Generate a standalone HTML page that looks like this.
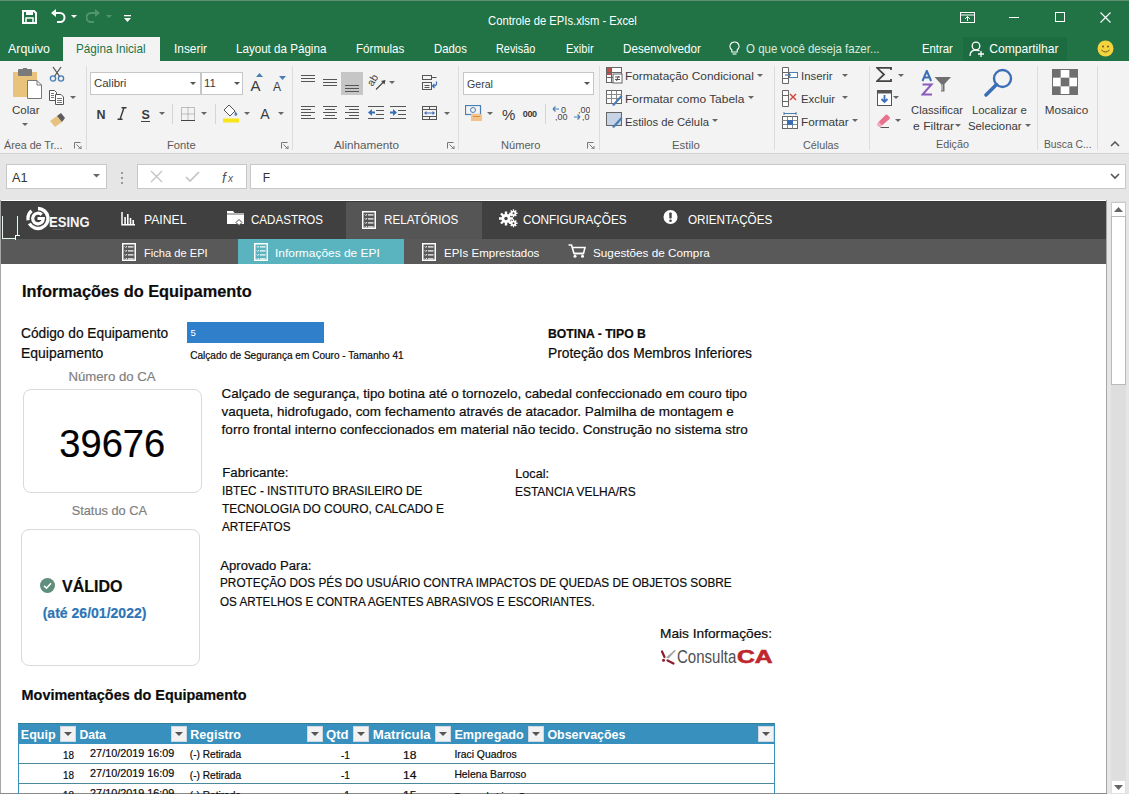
<!DOCTYPE html>
<html><head><meta charset="utf-8">
<style>
*{margin:0;padding:0;box-sizing:border-box}
html,body{width:1129px;height:794px;overflow:hidden;background:#fff}
body{position:relative;font-family:"Liberation Sans",sans-serif}
.t{position:absolute;white-space:nowrap}
.k{-webkit-text-stroke:0.2px currentColor}
.r{position:absolute;display:block}
</style></head><body>

<div class="r" style="left:0px;top:0px;width:1129px;height:61px;background:#217346"></div>
<div class="r" style="left:0px;top:0px;width:1129px;height:1px;background:#5e8e72"></div>
<svg class="r" style="left:22px;top:10px;" width="15" height="14" viewBox="0 0 15 14"><path d="M1 1 H12 L14 3 V13 H1 Z" fill="none" stroke="#fff" stroke-width="2"/><rect x="4" y="1" width="7" height="4" fill="#fff"/><rect x="4" y="8" width="7" height="5" fill="none" stroke="#fff" stroke-width="1.5"/></svg>
<svg class="r" style="left:50px;top:9px;" width="16" height="15" viewBox="0 0 16 15"><path d="M4 4 H10 A4.5 4.5 0 0 1 10 13 H7" fill="none" stroke="#fff" stroke-width="2"/><path d="M1 4 L6 0 V8 Z" fill="#fff"/></svg>
<svg class="r" style="left:70.5px;top:15px;" width="6" height="4" viewBox="0 0 6 4"><path d="M0 0 L6 0 L3 3 Z" fill="#fff"/></svg>
<svg class="r" style="left:86px;top:9px;" width="15" height="15" viewBox="0 0 15 15"><path d="M11 4 H5 A4.5 4.5 0 0 0 5 13 H8" fill="none" stroke="#4f9670" stroke-width="2"/><path d="M14 4 L9 0 V8 Z" fill="#4f9670"/></svg>
<svg class="r" style="left:105.5px;top:15px;" width="6" height="4" viewBox="0 0 6 4"><path d="M0 0 L6 0 L3 3 Z" fill="#4f9670"/></svg>
<svg class="r" style="left:124px;top:15px;" width="8" height="8" viewBox="0 0 8 8"><rect x="0" y="0" width="7" height="1.3" fill="#fff"/><path d="M0 3 H7 L3.5 7 Z" fill="#fff"/></svg>
<div class="t" style="left:488.00px;top:15.30px;font-size:12.20px;line-height:12.20px;color:#ffffff;transform:scaleX(0.9233);transform-origin:0 0;">Controle de EPIs.xlsm - Excel</div>
<svg class="r" style="left:960px;top:12px;" width="15" height="11" viewBox="0 0 15 11"><rect x="0.5" y="0.5" width="14" height="10" fill="none" stroke="#fff"/><path d="M0.5 3 H14.5" stroke="#fff"/><path d="M7.5 9 V4.5 M5 7 L7.5 4.5 L10 7" fill="none" stroke="#fff"/></svg>
<div class="r" style="left:1009px;top:17px;width:10px;height:1px;background:#fff"></div>
<div class="r" style="left:1055px;top:12px;width:10px;height:10px;border:1px solid #fff"></div>
<svg class="r" style="left:1100px;top:12px;" width="11" height="11" viewBox="0 0 11 11"><path d="M0.5 0.5 L10.5 10.5 M10.5 0.5 L0.5 10.5" stroke="#fff" stroke-width="1.1"/></svg>
<div class="r" style="left:63px;top:37px;width:97px;height:24px;background:#f3f3f3"></div>
<div class="t" style="left:8.00px;top:43.25px;font-size:12.10px;line-height:12.10px;color:#ffffff;transform:scaleX(1.0236);transform-origin:0 0;">Arquivo</div>
<div class="t" style="left:76.00px;top:43.25px;font-size:12.10px;line-height:12.10px;color:#217346;transform:scaleX(0.9671);transform-origin:0 0;">Página Inicial</div>
<div class="t" style="left:174.30px;top:43.25px;font-size:12.10px;line-height:12.10px;color:#ffffff;transform:scaleX(0.9817);transform-origin:0 0;">Inserir</div>
<div class="t" style="left:236.30px;top:43.25px;font-size:12.10px;line-height:12.10px;color:#ffffff;transform:scaleX(0.9597);transform-origin:0 0;">Layout da Página</div>
<div class="t" style="left:356.20px;top:43.25px;font-size:12.10px;line-height:12.10px;color:#ffffff;transform:scaleX(0.9597);transform-origin:0 0;">Fórmulas</div>
<div class="t" style="left:434.40px;top:43.25px;font-size:12.10px;line-height:12.10px;color:#ffffff;transform:scaleX(0.9405);transform-origin:0 0;">Dados</div>
<div class="t" style="left:496.40px;top:43.25px;font-size:12.10px;line-height:12.10px;color:#ffffff;transform:scaleX(0.8990);transform-origin:0 0;">Revisão</div>
<div class="t" style="left:565.50px;top:43.25px;font-size:12.10px;line-height:12.10px;color:#ffffff;transform:scaleX(0.9120);transform-origin:0 0;">Exibir</div>
<div class="t" style="left:622.50px;top:43.25px;font-size:12.10px;line-height:12.10px;color:#ffffff;transform:scaleX(0.9652);transform-origin:0 0;">Desenvolvedor</div>
<svg class="r" style="left:729px;top:41px;" width="11" height="15" viewBox="0 0 11 15"><path d="M5.5 1 A4.3 4.3 0 0 1 8.2 8.8 V11 H2.8 V8.8 A4.3 4.3 0 0 1 5.5 1 Z" fill="none" stroke="#fff" stroke-width="1.1"/><path d="M3.5 13 H7.5" stroke="#fff" stroke-width="1.1"/></svg>
<div class="t" style="left:746.00px;top:43.25px;font-size:12.10px;line-height:12.10px;color:#d9e9df;transform:scaleX(0.9504);transform-origin:0 0;">O que você deseja fazer...</div>
<div class="t" style="left:921.90px;top:43.25px;font-size:12.10px;line-height:12.10px;color:#ffffff;transform:scaleX(0.9378);transform-origin:0 0;">Entrar</div>
<div class="r" style="left:963px;top:37px;width:104px;height:24px;background:#1d6b40"></div>
<svg class="r" style="left:969px;top:41px;" width="16" height="16" viewBox="0 0 16 16"><circle cx="7" cy="5" r="3.8" fill="none" stroke="#fff" stroke-width="1.3"/><path d="M1 15 C1 10.5 4 9 7 9 C8.5 9 9.5 9.4 10.5 10" fill="none" stroke="#fff" stroke-width="1.3"/><path d="M12 10 V16 M9 13 H15" stroke="#fff" stroke-width="1.3"/></svg>
<div class="t" style="left:989.20px;top:43.25px;font-size:12.10px;line-height:12.10px;color:#ffffff;">Compartilhar</div>
<svg class="r" style="left:1097px;top:40px;" width="18" height="17" viewBox="0 0 18 17"><circle cx="8.5" cy="8.5" r="8" fill="#f5d33e"/><circle cx="6" cy="6.5" r="1" fill="#6b5a1a"/><circle cx="11" cy="6.5" r="1" fill="#6b5a1a"/><path d="M4.5 10 Q8.5 14 12.5 10" fill="none" stroke="#6b5a1a" stroke-width="1"/></svg>
<div class="r" style="left:0px;top:61px;width:1129px;height:92px;background:#f3f3f3"></div>
<div class="r" style="left:0px;top:153px;width:1129px;height:1px;background:#d4d4d4"></div>
<div class="r" style="left:86px;top:66px;width:1px;height:84px;background:#dcdcdc"></div>
<div class="r" style="left:292px;top:66px;width:1px;height:84px;background:#dcdcdc"></div>
<div class="r" style="left:458px;top:66px;width:1px;height:84px;background:#dcdcdc"></div>
<div class="r" style="left:599px;top:66px;width:1px;height:84px;background:#dcdcdc"></div>
<div class="r" style="left:774px;top:66px;width:1px;height:84px;background:#dcdcdc"></div>
<div class="r" style="left:869px;top:66px;width:1px;height:84px;background:#dcdcdc"></div>
<div class="r" style="left:1037px;top:66px;width:1px;height:84px;background:#dcdcdc"></div>
<div class="r" style="left:1097px;top:66px;width:1px;height:84px;background:#dcdcdc"></div>
<svg class="r" style="left:12px;top:68px;" width="31" height="32" viewBox="0 0 31 32"><rect x="1" y="4" width="24" height="25" fill="#e9c27c"/><rect x="6" y="1" width="14" height="7" rx="1" fill="#7a7a7a"/><rect x="11" y="0" width="4" height="3" fill="#7a7a7a"/><path d="M15.5 12.5 H25 L29.5 17 V30.5 H15.5 Z" fill="#fff" stroke="#777"/><path d="M25 12.5 V17 H29.5" fill="none" stroke="#777"/></svg>
<div class="t" style="left:11.50px;top:104.15px;font-size:11.70px;line-height:11.70px;color:#3b3b3b;transform:scaleX(0.9834);transform-origin:0 0;">Colar</div>
<svg class="r" style="left:21.5px;top:123px;" width="6" height="4" viewBox="0 0 6 4"><path d="M0 0 L6 0 L3 3 Z" fill="#666"/></svg>
<svg class="r" style="left:49px;top:66px;" width="16" height="16" viewBox="0 0 16 16"><path d="M4 1 L11 11 M12 1 L5 11" stroke="#555" stroke-width="1.3"/><circle cx="4" cy="12.5" r="2.6" fill="none" stroke="#4a7fb5" stroke-width="1.4"/><circle cx="12" cy="12.5" r="2.6" fill="none" stroke="#4a7fb5" stroke-width="1.4"/></svg>
<svg class="r" style="left:49px;top:90px;" width="16" height="15" viewBox="0 0 16 15"><path d="M0.5 0.5 H5.5 L7.5 2.5 V10.5 H0.5 Z" fill="#fff" stroke="#555"/><path d="M6.5 4.5 H12 L14.5 7 V14.5 H6.5 Z" fill="#fff" stroke="#555"/><path d="M8 8.5 H13 M8 10.5 H13 M8 12.5 H13 M2 3.5 H5 M2 5.5 H5 M2 7.5 H5" stroke="#666" stroke-width="0.9"/></svg>
<svg class="r" style="left:70px;top:96px;" width="6" height="4" viewBox="0 0 6 4"><path d="M0 0 L6 0 L3 3 Z" fill="#666"/></svg>
<svg class="r" style="left:49px;top:113px;" width="17" height="15" viewBox="0 0 17 15"><path d="M1 8 L8 3 L13 9 L6 14 Z" fill="#e6c27e"/><path d="M8 3 L12 0 L16 5 L13 9 Z" fill="#5c5c5c"/></svg>
<div class="t" style="left:4.40px;top:138.75px;font-size:11.70px;line-height:11.70px;color:#5b5b5b;transform:scaleX(0.9179);transform-origin:0 0;">Área de Tr...</div>
<svg class="r" style="left:74px;top:142px;" width="8" height="7" viewBox="0 0 8 7"><path d="M0.5 6.5 V0.5 H6.5" fill="none" stroke="#777"/><path d="M2.5 2.5 L7 7 M4 7 H7 V4" fill="none" stroke="#777"/></svg>
<div class="r" style="left:90px;top:72px;width:111px;height:23px;background:#fff;border:1px solid #c6c6c6"></div>
<div class="r" style="left:201px;top:72px;width:42px;height:23px;background:#fff;border:1px solid #c6c6c6"></div>
<div class="t" style="left:93.60px;top:77.45px;font-size:11.70px;line-height:11.70px;color:#3b3b3b;transform:scaleX(0.9771);transform-origin:0 0;">Calibri</div>
<svg class="r" style="left:190px;top:82px;" width="6" height="4" viewBox="0 0 6 4"><path d="M0 0 L6 0 L3 3 Z" fill="#555"/></svg>
<div class="t" style="left:203.70px;top:77.45px;font-size:11.70px;line-height:11.70px;color:#3b3b3b;transform:scaleX(0.9716);transform-origin:0 0;">11</div>
<svg class="r" style="left:233.5px;top:82px;" width="6" height="4" viewBox="0 0 6 4"><path d="M0 0 L6 0 L3 3 Z" fill="#555"/></svg>
<div class="t" style="left:250.50px;top:77.50px;font-size:15.00px;line-height:15.00px;color:#3b3b3b;">A</div>
<svg class="r" style="left:256px;top:73px;" width="8" height="5" viewBox="0 0 8 5"><path d="M0 4 L3.5 0 L7 4 Z" fill="#4a7fb5"/></svg>
<div class="t" style="left:273.00px;top:80.50px;font-size:12.00px;line-height:12.00px;color:#3b3b3b;">A</div>
<svg class="r" style="left:279px;top:76px;" width="8" height="5" viewBox="0 0 8 5"><path d="M0 0 L7 0 L3.5 4 Z" fill="#4a7fb5"/></svg>
<div class="t" style="left:96.60px;top:108.75px;font-size:12.50px;line-height:12.50px;color:#3b3b3b;font-weight:bold;">N</div>
<svg class="r" style="left:117px;top:107px;" width="10" height="13" viewBox="0 0 10 13"><path d="M4.5 0.8 H9.5 M0.5 12.2 H5.5 M7 0.8 L3 12.2" fill="none" stroke="#3b3b3b" stroke-width="1.4"/></svg>
<div class="t" style="left:141.40px;top:108.75px;font-size:12.50px;line-height:12.50px;color:#3b3b3b;font-weight:bold;">S</div>
<div class="r" style="left:141px;top:121px;width:9px;height:1px;background:#444"></div>
<svg class="r" style="left:158.5px;top:112px;" width="6" height="4" viewBox="0 0 6 4"><path d="M0 0 L6 0 L3 3 Z" fill="#666"/></svg>
<div class="r" style="left:172px;top:104px;width:1px;height:20px;background:#d5d5d5"></div>
<svg class="r" style="left:181px;top:107px;" width="14" height="14" viewBox="0 0 14 14"><rect x="0.5" y="0.5" width="13" height="13" fill="none" stroke="#888" stroke-dasharray="1 1"/><path d="M7 0.5 V13.5 M0.5 7 H13.5" stroke="#888" stroke-dasharray="1 1"/><path d="M0 13.5 H14" stroke="#444"/></svg>
<svg class="r" style="left:201.3px;top:112px;" width="6" height="4" viewBox="0 0 6 4"><path d="M0 0 L6 0 L3 3 Z" fill="#666"/></svg>
<div class="r" style="left:215px;top:104px;width:1px;height:20px;background:#d5d5d5"></div>
<svg class="r" style="left:223px;top:104px;" width="17" height="19" viewBox="0 0 17 19"><path d="M6 1 L12 7 L7 12 L1 6 Z" fill="#fff" stroke="#555"/><path d="M12 7 L14 9.5 A1.3 1.3 0 0 1 11.5 11" fill="#4a7fb5"/><rect x="0" y="14.5" width="16" height="4" fill="#f7e51a"/></svg>
<svg class="r" style="left:244.2px;top:112px;" width="6" height="4" viewBox="0 0 6 4"><path d="M0 0 L6 0 L3 3 Z" fill="#666"/></svg>
<div class="t" style="left:260.20px;top:106.50px;font-size:14.00px;line-height:14.00px;color:#3b3b3b;">A</div>
<svg class="r" style="left:278.3px;top:112px;" width="6" height="4" viewBox="0 0 6 4"><path d="M0 0 L6 0 L3 3 Z" fill="#666"/></svg>
<div class="t" style="left:166.70px;top:138.85px;font-size:11.70px;line-height:11.70px;color:#5b5b5b;transform:scaleX(0.9593);transform-origin:0 0;">Fonte</div>
<svg class="r" style="left:281px;top:142px;" width="8" height="7" viewBox="0 0 8 7"><path d="M0.5 6.5 V0.5 H6.5" fill="none" stroke="#777"/><path d="M2.5 2.5 L7 7 M4 7 H7 V4" fill="none" stroke="#777"/></svg>
<div class="r" style="left:341px;top:72px;width:22px;height:23px;background:#c6c6c6"></div>
<svg class="r" style="left:301px;top:75px;" width="14" height="9" viewBox="0 0 14 9"><rect x="0" y="0" width="14" height="1" fill="#555"/><rect x="0" y="3" width="14" height="1" fill="#555"/><rect x="0" y="6" width="14" height="1" fill="#555"/></svg>
<svg class="r" style="left:323px;top:79px;" width="14" height="9" viewBox="0 0 14 9"><rect x="0" y="0" width="14" height="1" fill="#555"/><rect x="0" y="3" width="14" height="1" fill="#555"/><rect x="0" y="6" width="14" height="1" fill="#555"/></svg>
<svg class="r" style="left:345px;top:85px;" width="14" height="9" viewBox="0 0 14 9"><rect x="0" y="0" width="14" height="1" fill="#555"/><rect x="0" y="3" width="14" height="1" fill="#555"/><rect x="0" y="6" width="14" height="1" fill="#555"/></svg>
<svg class="r" style="left:367px;top:72px;" width="20" height="19" viewBox="0 0 20 19"><text x="0" y="0" font-size="10.5" font-family="Liberation Sans" fill="#444" transform="translate(5.5 15) rotate(-58)">ab</text><path d="M9 17.5 L17.5 9" stroke="#444" stroke-width="1.1"/><path d="M18.5 8 L14 9 L17.5 12.5 Z" fill="#444"/></svg>
<svg class="r" style="left:388.6px;top:81px;" width="6" height="4" viewBox="0 0 6 4"><path d="M0 0 L6 0 L3 3 Z" fill="#666"/></svg>
<svg class="r" style="left:421px;top:74px;" width="18" height="17" viewBox="0 0 18 17"><rect x="1.5" y="1.5" width="9" height="4" fill="none" stroke="#555"/><path d="M10.5 3.5 H15.5" stroke="#555"/><rect x="1.5" y="8.5" width="9" height="7" fill="none" stroke="#555"/><path d="M3.5 11.5 H8.5 M3.5 13.5 H8.5" stroke="#555"/><path d="M15.5 7.5 V9.5 A2.5 2.5 0 0 1 13 12 H11.5 M13.5 10 L11.5 12 L13.5 14" fill="none" stroke="#3b6fb5" stroke-width="1.2"/></svg>
<svg class="r" style="left:301px;top:106px;" width="14" height="15" viewBox="0 0 14 15"><rect x="0" y="0" width="14" height="1" fill="#555"/><rect x="0" y="3" width="10" height="1" fill="#555"/><rect x="0" y="6" width="14" height="1" fill="#555"/><rect x="0" y="9" width="10" height="1" fill="#555"/><rect x="0" y="12" width="14" height="1" fill="#555"/></svg>
<svg class="r" style="left:323px;top:106px;" width="16" height="15" viewBox="0 0 16 15"><rect x="0" y="0" width="14" height="1" fill="#555"/><rect x="2" y="3" width="10" height="1" fill="#555"/><rect x="0" y="6" width="14" height="1" fill="#555"/><rect x="2" y="9" width="10" height="1" fill="#555"/><rect x="0" y="12" width="14" height="1" fill="#555"/></svg>
<svg class="r" style="left:345px;top:106px;" width="18" height="15" viewBox="0 0 18 15"><rect x="0" y="0" width="14" height="1" fill="#555"/><rect x="4" y="3" width="10" height="1" fill="#555"/><rect x="0" y="6" width="14" height="1" fill="#555"/><rect x="4" y="9" width="10" height="1" fill="#555"/><rect x="0" y="12" width="14" height="1" fill="#555"/></svg>
<svg class="r" style="left:368px;top:106px;" width="17" height="14" viewBox="0 0 17 14"><path d="M0 0.5 H16 M8 4.5 H16 M8 8.5 H16 M0 12.5 H16" stroke="#555"/><path d="M0 6.5 L4 3 V10 Z" fill="#3b6fb5"/><rect x="3" y="5.5" width="4" height="2" fill="#3b6fb5"/></svg>
<svg class="r" style="left:390px;top:106px;" width="17" height="14" viewBox="0 0 17 14"><path d="M0 0.5 H16 M8 4.5 H16 M8 8.5 H16 M0 12.5 H16" stroke="#555"/><path d="M7 6.5 L3 3 V10 Z" fill="#3b6fb5"/><rect x="0" y="5.5" width="4" height="2" fill="#3b6fb5"/></svg>
<svg class="r" style="left:421px;top:105px;" width="17" height="16" viewBox="0 0 17 16"><rect x="1.5" y="1.5" width="14" height="13" fill="none" stroke="#555"/><path d="M1.5 4.5 H15.5 M1.5 11.5 H15.5 M8.5 1.5 V4.5 M8.5 11.5 V14.5" stroke="#555"/><path d="M4 8 H13" stroke="#3b6fb5"/><path d="M3 8 L5.5 6 V10 Z M14 8 L11.5 6 V10 Z" fill="#3b6fb5"/></svg>
<svg class="r" style="left:443.5px;top:112px;" width="6" height="4" viewBox="0 0 6 4"><path d="M0 0 L6 0 L3 3 Z" fill="#666"/></svg>
<div class="t" style="left:334.00px;top:138.55px;font-size:11.70px;line-height:11.70px;color:#5b5b5b;">Alinhamento</div>
<svg class="r" style="left:447px;top:142px;" width="8" height="7" viewBox="0 0 8 7"><path d="M0.5 6.5 V0.5 H6.5" fill="none" stroke="#777"/><path d="M2.5 2.5 L7 7 M4 7 H7 V4" fill="none" stroke="#777"/></svg>
<div class="r" style="left:463px;top:72px;width:131px;height:23px;background:#fff;border:1px solid #c6c6c6"></div>
<div class="t" style="left:466.50px;top:77.65px;font-size:11.70px;line-height:11.70px;color:#3b3b3b;transform:scaleX(0.9089);transform-origin:0 0;">Geral</div>
<svg class="r" style="left:583.5px;top:82px;" width="6" height="4" viewBox="0 0 6 4"><path d="M0 0 L6 0 L3 3 Z" fill="#555"/></svg>
<svg class="r" style="left:465px;top:105px;" width="18" height="17" viewBox="0 0 18 17"><rect x="0.5" y="0.5" width="15" height="9" fill="none" stroke="#4a7fb5" stroke-width="1.2"/><circle cx="8" cy="5" r="2.5" fill="none" stroke="#4a7fb5"/><rect x="6" y="9" width="11" height="7" fill="#f2c38a"/><rect x="8" y="11" width="7" height="1" fill="#d9913e"/></svg>
<svg class="r" style="left:487.4px;top:112px;" width="6" height="4" viewBox="0 0 6 4"><path d="M0 0 L6 0 L3 3 Z" fill="#666"/></svg>
<div class="t" style="left:502.00px;top:106.50px;font-size:15.00px;line-height:15.00px;color:#3b3b3b;">%</div>
<div class="t" style="left:522.80px;top:110.00px;font-size:9.00px;line-height:9.00px;color:#3b3b3b;font-weight:bold;letter-spacing:-0.406px;">000</div>
<div class="r" style="left:545px;top:104px;width:1px;height:20px;background:#d5d5d5"></div>
<svg class="r" style="left:552px;top:105px;" width="17" height="16" viewBox="0 0 17 16"><path d="M1 4 H7 M1 4 L3.5 1.5 M1 4 L3.5 6.5" fill="none" stroke="#4a7fb5" stroke-width="1.2"/><text x="9" y="8" font-size="9" font-family="Liberation Sans" fill="#444">0</text><text x="3" y="15" font-size="9" font-family="Liberation Sans" fill="#444">,00</text></svg>
<svg class="r" style="left:573px;top:105px;" width="17" height="16" viewBox="0 0 17 16"><text x="5" y="8" font-size="9" font-family="Liberation Sans" fill="#444">,00</text><path d="M1 12 H7 M7 12 L4.5 9.5 M7 12 L4.5 14.5" fill="none" stroke="#4a7fb5" stroke-width="1.2"/><text x="9" y="15" font-size="9" font-family="Liberation Sans" fill="#444">,0</text></svg>
<div class="t" style="left:500.90px;top:138.55px;font-size:11.70px;line-height:11.70px;color:#5b5b5b;transform:scaleX(0.9491);transform-origin:0 0;">Número</div>
<svg class="r" style="left:587px;top:142px;" width="8" height="7" viewBox="0 0 8 7"><path d="M0.5 6.5 V0.5 H6.5" fill="none" stroke="#777"/><path d="M2.5 2.5 L7 7 M4 7 H7 V4" fill="none" stroke="#777"/></svg>
<svg class="r" style="left:606px;top:67px;" width="17" height="17" viewBox="0 0 17 17"><rect x="0.5" y="0.5" width="15" height="15" fill="#fff" stroke="#666"/><rect x="1" y="1" width="5" height="7" fill="#c0504d"/><path d="M0.5 5.5 H15.5 M0.5 10.5 H15.5 M5.5 0.5 V15.5" stroke="#666"/><rect x="7" y="7" width="9" height="9" fill="#fff" stroke="#666"/><path d="M9 10 H14 M9 12.5 H14 M12.5 9 L10.5 14" stroke="#444" stroke-width="0.9"/></svg>
<div class="t" style="left:625.40px;top:70.15px;font-size:11.70px;line-height:11.70px;color:#3b3b3b;transform:scaleX(1.0172);transform-origin:0 0;">Formatação Condicional</div>
<svg class="r" style="left:757.3px;top:74px;" width="6" height="4" viewBox="0 0 6 4"><path d="M0 0 L6 0 L3 3 Z" fill="#666"/></svg>
<svg class="r" style="left:606px;top:90px;" width="17" height="16" viewBox="0 0 17 16"><rect x="0.5" y="0.5" width="15" height="13" fill="#fff" stroke="#666"/><path d="M0.5 4.5 H15.5 M0.5 8.5 H15.5 M5.5 0.5 V13.5 M10.5 0.5 V13.5" stroke="#888"/><path d="M6 15 L15 5 L16.5 6.5 L8 16 Z" fill="#4a7fb5"/></svg>
<div class="t" style="left:625.40px;top:92.55px;font-size:11.70px;line-height:11.70px;color:#3b3b3b;transform:scaleX(1.0227);transform-origin:0 0;">Formatar como Tabela</div>
<svg class="r" style="left:747.5px;top:96px;" width="6" height="4" viewBox="0 0 6 4"><path d="M0 0 L6 0 L3 3 Z" fill="#666"/></svg>
<svg class="r" style="left:606px;top:112px;" width="17" height="16" viewBox="0 0 17 16"><rect x="0.5" y="0.5" width="15" height="13" fill="#fff" stroke="#666"/><rect x="1" y="1" width="14" height="12" fill="#c7d4e6"/><path d="M6 15 L15 5 L16.5 6.5 L8 16 Z" fill="#4a7fb5"/></svg>
<div class="t" style="left:625.40px;top:115.65px;font-size:11.70px;line-height:11.70px;color:#3b3b3b;transform:scaleX(0.9638);transform-origin:0 0;">Estilos de Célula</div>
<svg class="r" style="left:712.4px;top:119px;" width="6" height="4" viewBox="0 0 6 4"><path d="M0 0 L6 0 L3 3 Z" fill="#666"/></svg>
<div class="t" style="left:672.20px;top:138.75px;font-size:11.70px;line-height:11.70px;color:#5b5b5b;transform:scaleX(0.9718);transform-origin:0 0;">Estilo</div>
<svg class="r" style="left:782px;top:67px;" width="16" height="17" viewBox="0 0 16 17"><path d="M0.5 0.5 H6.5 V16.5 H0.5 Z M0.5 5.5 H6.5 M0.5 11.5 H6.5" fill="#fff" stroke="#666"/><rect x="7.5" y="5.5" width="8" height="5" fill="#fff" stroke="#4a7fb5"/><path d="M3 8 H9" stroke="#4a7fb5" stroke-width="1.3"/></svg>
<div class="t" style="left:801.10px;top:70.15px;font-size:11.70px;line-height:11.70px;color:#3b3b3b;transform:scaleX(0.9722);transform-origin:0 0;">Inserir</div>
<svg class="r" style="left:842.1px;top:74px;" width="6" height="4" viewBox="0 0 6 4"><path d="M0 0 L6 0 L3 3 Z" fill="#666"/></svg>
<svg class="r" style="left:782px;top:90px;" width="16" height="17" viewBox="0 0 16 17"><path d="M0.5 0.5 H6.5 V16.5 H0.5 Z M0.5 5.5 H6.5 M0.5 11.5 H6.5" fill="#fff" stroke="#666"/><path d="M8 4 L14 10 M14 4 L8 10" stroke="#d04437" stroke-width="1.4"/></svg>
<div class="t" style="left:801.10px;top:92.55px;font-size:11.70px;line-height:11.70px;color:#3b3b3b;transform:scaleX(0.9740);transform-origin:0 0;">Excluir</div>
<svg class="r" style="left:842.1px;top:96px;" width="6" height="4" viewBox="0 0 6 4"><path d="M0 0 L6 0 L3 3 Z" fill="#666"/></svg>
<svg class="r" style="left:782px;top:112px;" width="16" height="17" viewBox="0 0 16 17"><rect x="0.5" y="4.5" width="15" height="12" fill="#fff" stroke="#666"/><path d="M0.5 8.5 H15.5 M0.5 12.5 H15.5 M5.5 4.5 V16.5 M10.5 4.5 V16.5" stroke="#888"/><rect x="5" y="8" width="6" height="5" fill="#3b6fb5"/><path d="M2 1.5 H14 M2 0 V3 M14 0 V3" stroke="#4a7fb5"/></svg>
<div class="t" style="left:801.10px;top:115.65px;font-size:11.70px;line-height:11.70px;color:#3b3b3b;transform:scaleX(1.0073);transform-origin:0 0;">Formatar</div>
<svg class="r" style="left:851.6px;top:119px;" width="6" height="4" viewBox="0 0 6 4"><path d="M0 0 L6 0 L3 3 Z" fill="#666"/></svg>
<div class="t" style="left:803.20px;top:138.75px;font-size:11.70px;line-height:11.70px;color:#5b5b5b;transform:scaleX(0.9226);transform-origin:0 0;">Células</div>
<svg class="r" style="left:876px;top:67px;" width="16" height="15" viewBox="0 0 16 15"><path d="M15 3 V0.8 H1 L8 7.5 L1 14.2 H15 V12" fill="none" stroke="#444" stroke-width="1.8"/></svg>
<svg class="r" style="left:897.5px;top:74px;" width="6" height="4" viewBox="0 0 6 4"><path d="M0 0 L6 0 L3 3 Z" fill="#666"/></svg>
<svg class="r" style="left:877px;top:90px;" width="15" height="16" viewBox="0 0 15 16"><rect x="0.5" y="0.5" width="14" height="15" fill="#fff" stroke="#555"/><rect x="0.5" y="0.5" width="14" height="3" fill="#555"/><path d="M7.5 5 V12 M4.5 9 L7.5 12 L10.5 9" fill="none" stroke="#3b6fb5" stroke-width="1.8"/></svg>
<svg class="r" style="left:893px;top:96px;" width="6" height="4" viewBox="0 0 6 4"><path d="M0 0 L6 0 L3 3 Z" fill="#666"/></svg>
<svg class="r" style="left:876px;top:113px;" width="16" height="16" viewBox="0 0 16 16"><path d="M6 12.5 L2.5 9 L9.5 2 A1.5 1.5 0 0 1 11.6 2 L13.5 3.9 A1.5 1.5 0 0 1 13.5 6 Z" fill="#e8728e"/><path d="M2.5 9 L6 12.5 L4.5 14 H3 L1 12 V10.5 Z" fill="#f2a9bb"/><path d="M4.5 14.5 H13" stroke="#555" stroke-width="1"/></svg>
<svg class="r" style="left:895px;top:119px;" width="6" height="4" viewBox="0 0 6 4"><path d="M0 0 L6 0 L3 3 Z" fill="#666"/></svg>
<svg class="r" style="left:921px;top:70px;" width="31" height="27" viewBox="0 0 31 27"><path d="M1.5 11 L5.8 0.8 L10.1 11 M3.2 7.5 H8.4" fill="none" stroke="#3b6fb5" stroke-width="2"/><path d="M1.5 14.5 H10.5 L1.5 24.5 H11" fill="none" stroke="#8a5bbd" stroke-width="2"/><path d="M13.5 7 H30 L23.5 14 V21.5 L20 21.5 V14 Z" fill="#6f6f6f"/><path d="M21 14.5 V20.5" stroke="#f3f3f3" stroke-width="1"/></svg>
<div class="t" style="left:910.50px;top:104.45px;font-size:11.70px;line-height:11.70px;color:#3b3b3b;transform:scaleX(0.9637);transform-origin:0 0;">Classificar</div>
<div class="t" style="left:912.90px;top:119.75px;font-size:11.70px;line-height:11.70px;color:#3b3b3b;transform:scaleX(1.0391);transform-origin:0 0;">e Filtrar</div>
<svg class="r" style="left:954.7px;top:124px;" width="6" height="4" viewBox="0 0 6 4"><path d="M0 0 L6 0 L3 3 Z" fill="#666"/></svg>
<svg class="r" style="left:984px;top:68px;" width="30" height="29" viewBox="0 0 30 29"><circle cx="18.5" cy="10.5" r="8.5" fill="none" stroke="#3b6fb5" stroke-width="2.4"/><path d="M12.5 16.5 L2 27" stroke="#3b6fb5" stroke-width="3.5" stroke-linecap="round"/></svg>
<div class="t" style="left:972.00px;top:104.45px;font-size:11.70px;line-height:11.70px;color:#3b3b3b;transform:scaleX(0.9685);transform-origin:0 0;">Localizar e</div>
<div class="t" style="left:968.40px;top:119.75px;font-size:11.70px;line-height:11.70px;color:#3b3b3b;transform:scaleX(0.9696);transform-origin:0 0;">Selecionar</div>
<svg class="r" style="left:1025px;top:124px;" width="6" height="4" viewBox="0 0 6 4"><path d="M0 0 L6 0 L3 3 Z" fill="#666"/></svg>
<div class="t" style="left:936.20px;top:137.85px;font-size:11.70px;line-height:11.70px;color:#5b5b5b;transform:scaleX(0.9195);transform-origin:0 0;">Edição</div>
<svg class="r" style="left:1052px;top:69px;" width="26" height="26" viewBox="0 0 26 26"><rect x="0" y="0" width="26" height="26" fill="#fff"/><rect x="0.00" y="0.00" width="8.67" height="8.67" fill="#6f6f6f"/><rect x="17.33" y="0.00" width="8.67" height="8.67" fill="#6f6f6f"/><rect x="8.67" y="8.67" width="8.67" height="8.67" fill="#6f6f6f"/><rect x="0.00" y="17.33" width="8.67" height="8.67" fill="#6f6f6f"/><rect x="17.33" y="17.33" width="8.67" height="8.67" fill="#6f6f6f"/><rect x="0.5" y="0.5" width="25" height="25" fill="none" stroke="#6f6f6f"/></svg>
<div class="t" style="left:1044.70px;top:103.75px;font-size:11.70px;line-height:11.70px;color:#3b3b3b;">Mosaico</div>
<div class="t" style="left:1043.50px;top:137.85px;font-size:11.70px;line-height:11.70px;color:#5b5b5b;transform:scaleX(0.8819);transform-origin:0 0;">Busca C...</div>
<svg class="r" style="left:1110px;top:141px;" width="10" height="6" viewBox="0 0 10 6"><path d="M1 5 L5 1 L9 5" fill="none" stroke="#555" stroke-width="1.5"/></svg>
<div class="r" style="left:0px;top:154px;width:1129px;height:46px;background:#e6e6e6"></div>
<div class="r" style="left:6px;top:164px;width:101px;height:25px;background:#fff;border:1px solid #c8c8c8"></div>
<div class="t" style="left:12.30px;top:171.95px;font-size:12.50px;line-height:12.50px;color:#333;transform:scaleX(1.0139);transform-origin:0 0;">A1</div>
<svg class="r" style="left:93.0px;top:174px;" width="7.0" height="4" viewBox="0 0 7.0 4"><path d="M0 0 L7.0 0 L3.5 3.5 Z" fill="#666"/></svg>
<div class="r" style="left:121px;top:172px;width:2px;height:2px;background:#999"></div>
<div class="r" style="left:121px;top:177px;width:2px;height:2px;background:#999"></div>
<div class="r" style="left:121px;top:182px;width:2px;height:2px;background:#999"></div>
<div class="r" style="left:137px;top:164px;width:110px;height:25px;background:#fff;border:1px solid #c8c8c8"></div>
<svg class="r" style="left:150px;top:170px;" width="13" height="13" viewBox="0 0 13 13"><path d="M1 1 L12 12 M12 1 L1 12" stroke="#c3c3c3" stroke-width="1.3"/></svg>
<svg class="r" style="left:185px;top:170px;" width="15" height="13" viewBox="0 0 15 13"><path d="M1 7 L5 11 L14 2" fill="none" stroke="#c3c3c3" stroke-width="1.6"/></svg>
<div class="t" style="left:222.00px;top:170.50px;font-size:14.00px;line-height:14.00px;color:#555;font-style:italic;font-family:"Liberation Serif",serif;font-weight:bold;">f</div>
<div class="t" style="left:228.00px;top:174.00px;font-size:10.00px;line-height:10.00px;color:#555;font-style:italic;font-family:"Liberation Serif",serif;">x</div>
<div class="r" style="left:250px;top:164px;width:876px;height:25px;background:#fff;border:1px solid #c8c8c8"></div>
<div class="t" style="left:262.70px;top:172.10px;font-size:12.00px;line-height:12.00px;color:#333;">F</div>
<svg class="r" style="left:1110px;top:173px;" width="10" height="7" viewBox="0 0 10 7"><path d="M1 1 L5 5 L9 1" fill="none" stroke="#555" stroke-width="1.6"/></svg>
<div class="r" style="left:0px;top:200px;width:1107px;height:594px;background:#fff"></div>
<div class="r" style="left:0px;top:200px;width:1px;height:594px;background:#a6a6a6"></div>
<div class="r" style="left:1106px;top:200px;width:1px;height:594px;background:#a6a6a6"></div>
<div class="r" style="left:1107px;top:200px;width:22px;height:594px;background:#e6e6e6"></div>
<div class="r" style="left:1111px;top:201px;width:15px;height:592px;background:#dedede"></div>
<div class="r" style="left:1111px;top:202px;width:15px;height:15px;background:#fff;border:1px solid #c8c8c8"></div>
<svg class="r" style="left:1114px;top:207px;" width="9" height="5" viewBox="0 0 9 5"><path d="M0 5 L4.5 0 L9 5 Z" fill="#666"/></svg>
<div class="r" style="left:1111px;top:216px;width:15px;height:169px;background:#fff;border:1px solid #b9b9b9"></div>
<div class="r" style="left:1111px;top:780px;width:15px;height:14px;background:#fff;border:1px solid #e0e0e0"></div>
<svg class="r" style="left:1114px;top:785px;" width="9" height="5" viewBox="0 0 9 5"><path d="M0 0 L9 0 L4.5 5 Z" fill="#666"/></svg>
<div class="r" style="left:0px;top:793px;width:1107px;height:1px;background:#8a8a8a"></div>
<div class="r" style="left:1px;top:201px;width:1105px;height:38px;background:#404040"></div>
<div class="r" style="left:1px;top:201px;width:1105px;height:1px;background:#383838"></div>
<div class="r" style="left:346px;top:202px;width:136px;height:37px;background:#555555"></div>
<div class="r" style="left:1px;top:239px;width:1105px;height:25px;background:#595959"></div>
<div class="r" style="left:238px;top:239px;width:166px;height:25px;background:#5ab4c0"></div>
<div class="r" style="left:2px;top:216px;width:1px;height:23px;background:#e8f5ee;box-shadow:0 0 1px 0 rgba(33,160,90,0.7)"></div>
<div class="r" style="left:2px;top:238px;width:14px;height:1px;background:#e8f5ee;box-shadow:0 0 1px 0 rgba(33,160,90,0.7)"></div>
<div class="r" style="left:17px;top:216px;width:1px;height:20px;background:#e8f5ee;box-shadow:0 0 1px 0 rgba(33,160,90,0.7)"></div>
<div class="r" style="left:15px;top:235px;width:5px;height:5px;border-top:1px solid #fff;border-left:1px solid #fff;background:transparent"></div>
<svg class="r" style="left:26px;top:205px;" width="26" height="27" viewBox="0 0 26 27"><path d="M12 3.5 A10 10 0 1 1 3.34 18.5" fill="none" stroke="#fff" stroke-width="3.4"/><path d="M2.15 15.24 A10 10 0 0 1 5.57 5.84" fill="none" stroke="#fff" stroke-width="3.2"/><path d="M15.75 9.75 A5.3 5.3 0 1 0 17.3 13.5 H11.5" fill="none" stroke="#fff" stroke-width="3.2"/></svg>
<div class="t" style="left:49.20px;top:215.20px;font-size:14.20px;line-height:14.20px;color:#f4f4f4;font-weight:bold;transform:scaleX(0.9210);transform-origin:0 0;">ESING</div>
<div class="r" style="left:52px;top:229px;width:12px;height:1px;background:#5a5a5a"></div>
<svg class="r" style="left:121px;top:212px;" width="14" height="14" viewBox="0 0 14 14"><path d="M1 0 V12.8 H14" fill="none" stroke="#fff" stroke-width="1.5"/><rect x="3.3" y="5" width="1.6" height="7" fill="#fff"/><rect x="6" y="2" width="1.6" height="10" fill="#fff"/><rect x="8.7" y="6" width="1.6" height="6" fill="#fff"/><rect x="11.4" y="8" width="1.6" height="4" fill="#fff"/></svg>
<div class="t" style="left:143.90px;top:213.30px;font-size:13.20px;line-height:13.20px;color:#ffffff;transform:scaleX(0.9244);transform-origin:0 0;">PAINEL</div>
<svg class="r" style="left:227px;top:210px;" width="18" height="16" viewBox="0 0 18 16"><path d="M0 1 H6 L7.5 3 H17 V14 H0 Z" fill="#fff"/><path d="M0 4 H17" stroke="#404040" stroke-width="0.8"/><path d="M12 9.5 L15 12.5 L12 15.5 L9 12.5 Z" fill="#fff" stroke="#404040" stroke-width="1"/></svg>
<div class="t" style="left:251.10px;top:213.30px;font-size:13.20px;line-height:13.20px;color:#ffffff;transform:scaleX(0.8777);transform-origin:0 0;">CADASTROS</div>
<svg class="r" style="left:362px;top:211px;" width="14" height="18" viewBox="0 0 14 18"><rect x="0.75" y="0.75" width="12.5" height="16.5" fill="none" stroke="#fff" stroke-width="1.5"/><path d="M2.8 3.5 L3.8 4.5 L5 3.0" fill="none" stroke="#fff" stroke-width="0.9"/><rect x="6" y="3.3" width="5.5" height="1.2" fill="#fff"/><path d="M2.8 7.5 L3.8 8.5 L5 7.0" fill="none" stroke="#fff" stroke-width="0.9"/><rect x="6" y="7.3" width="5.5" height="1.2" fill="#fff"/><path d="M2.8 11.5 L3.8 12.5 L5 11.0" fill="none" stroke="#fff" stroke-width="0.9"/><rect x="6" y="11.3" width="5.5" height="1.2" fill="#fff"/><path d="M2.8 15.5 L3.8 16.5 L5 15.0" fill="none" stroke="#fff" stroke-width="0.9"/><rect x="6" y="15.3" width="5.5" height="1.2" fill="#fff"/></svg>
<div class="t" style="left:383.80px;top:213.30px;font-size:13.20px;line-height:13.20px;color:#ffffff;transform:scaleX(0.8834);transform-origin:0 0;">RELATÓRIOS</div>
<svg class="r" style="left:499px;top:209px;" width="19" height="19" viewBox="0 0 19 19"><g fill="#fff"><circle cx="7" cy="9.5" r="4.6"/><g stroke="#fff" stroke-width="2.4"><path d="M7 2.5 V16.5 M0 9.5 H14 M2 4.5 L12 14.5 M12 4.5 L2 14.5"/></g><circle cx="7" cy="9.5" r="1.7" fill="#404040"/><circle cx="14.5" cy="4.3" r="2.6"/><g stroke="#fff" stroke-width="1.4"><path d="M14.5 0.3 V8.3 M10.5 4.3 H18.5 M11.7 1.5 L17.3 7.1 M17.3 1.5 L11.7 7.1"/></g><circle cx="14.5" cy="4.3" r="1" fill="#404040"/><circle cx="14.5" cy="14.3" r="2.6"/><g stroke="#fff" stroke-width="1.4"><path d="M14.5 10.3 V18.3 M10.5 14.3 H18.5 M11.7 11.5 L17.3 17.1 M17.3 11.5 L11.7 17.1"/></g><circle cx="14.5" cy="14.3" r="1" fill="#404040"/></g></svg>
<div class="t" style="left:523.30px;top:213.30px;font-size:13.20px;line-height:13.20px;color:#ffffff;transform:scaleX(0.8893);transform-origin:0 0;">CONFIGURAÇÕES</div>
<svg class="r" style="left:663px;top:210px;" width="15" height="14" viewBox="0 0 15 14"><circle cx="7.5" cy="7" r="7" fill="#fff"/><rect x="6.3" y="2.5" width="2.4" height="6" rx="0.8" fill="#404040"/><circle cx="7.5" cy="10.8" r="1.3" fill="#404040"/></svg>
<div class="t" style="left:687.60px;top:213.30px;font-size:13.20px;line-height:13.20px;color:#ffffff;transform:scaleX(0.8874);transform-origin:0 0;">ORIENTAÇÕES</div>
<svg class="r" style="left:122px;top:243px;" width="14" height="18" viewBox="0 0 14 18"><rect x="0.75" y="0.75" width="12.5" height="16.5" fill="none" stroke="#fff" stroke-width="1.5"/><path d="M2.8 3.5 L3.8 4.5 L5 3.0" fill="none" stroke="#fff" stroke-width="0.9"/><rect x="6" y="3.3" width="5.5" height="1.2" fill="#fff"/><path d="M2.8 7.5 L3.8 8.5 L5 7.0" fill="none" stroke="#fff" stroke-width="0.9"/><rect x="6" y="7.3" width="5.5" height="1.2" fill="#fff"/><path d="M2.8 11.5 L3.8 12.5 L5 11.0" fill="none" stroke="#fff" stroke-width="0.9"/><rect x="6" y="11.3" width="5.5" height="1.2" fill="#fff"/><path d="M2.8 15.5 L3.8 16.5 L5 15.0" fill="none" stroke="#fff" stroke-width="0.9"/><rect x="6" y="15.3" width="5.5" height="1.2" fill="#fff"/></svg>
<div class="t" style="left:143.90px;top:246.50px;font-size:11.60px;line-height:11.60px;color:#ffffff;transform:scaleX(0.9592);transform-origin:0 0;">Ficha de EPI</div>
<svg class="r" style="left:254px;top:243px;" width="14" height="18" viewBox="0 0 14 18"><rect x="0.75" y="0.75" width="12.5" height="16.5" fill="none" stroke="#fff" stroke-width="1.5"/><path d="M2.8 3.5 L3.8 4.5 L5 3.0" fill="none" stroke="#fff" stroke-width="0.9"/><rect x="6" y="3.3" width="5.5" height="1.2" fill="#fff"/><path d="M2.8 7.5 L3.8 8.5 L5 7.0" fill="none" stroke="#fff" stroke-width="0.9"/><rect x="6" y="7.3" width="5.5" height="1.2" fill="#fff"/><path d="M2.8 11.5 L3.8 12.5 L5 11.0" fill="none" stroke="#fff" stroke-width="0.9"/><rect x="6" y="11.3" width="5.5" height="1.2" fill="#fff"/><path d="M2.8 15.5 L3.8 16.5 L5 15.0" fill="none" stroke="#fff" stroke-width="0.9"/><rect x="6" y="15.3" width="5.5" height="1.2" fill="#fff"/></svg>
<div class="t" style="left:275.00px;top:246.50px;font-size:11.60px;line-height:11.60px;color:#ffffff;transform:scaleX(1.0288);transform-origin:0 0;">Informações de EPI</div>
<svg class="r" style="left:422px;top:243px;" width="14" height="18" viewBox="0 0 14 18"><rect x="0.75" y="0.75" width="12.5" height="16.5" fill="none" stroke="#fff" stroke-width="1.5"/><path d="M2.8 3.5 L3.8 4.5 L5 3.0" fill="none" stroke="#fff" stroke-width="0.9"/><rect x="6" y="3.3" width="5.5" height="1.2" fill="#fff"/><path d="M2.8 7.5 L3.8 8.5 L5 7.0" fill="none" stroke="#fff" stroke-width="0.9"/><rect x="6" y="7.3" width="5.5" height="1.2" fill="#fff"/><path d="M2.8 11.5 L3.8 12.5 L5 11.0" fill="none" stroke="#fff" stroke-width="0.9"/><rect x="6" y="11.3" width="5.5" height="1.2" fill="#fff"/><path d="M2.8 15.5 L3.8 16.5 L5 15.0" fill="none" stroke="#fff" stroke-width="0.9"/><rect x="6" y="15.3" width="5.5" height="1.2" fill="#fff"/></svg>
<div class="t" style="left:443.60px;top:246.50px;font-size:11.60px;line-height:11.60px;color:#ffffff;transform:scaleX(0.9931);transform-origin:0 0;">EPIs Emprestados</div>
<svg class="r" style="left:568px;top:244px;" width="18" height="14" viewBox="0 0 18 14"><path d="M0.5 1 H3.5 L6 9.5 H15.5 L17 3.5 H4.5" fill="none" stroke="#fff" stroke-width="1.6"/><circle cx="7" cy="12.3" r="1.5" fill="#fff"/><circle cx="14.5" cy="12.3" r="1.5" fill="#fff"/><path d="M6 9.5 H16" stroke="#fff" stroke-width="1.6"/></svg>
<div class="t" style="left:593.20px;top:246.90px;font-size:11.60px;line-height:11.60px;color:#ffffff;transform:scaleX(1.0127);transform-origin:0 0;">Sugestões de Compra</div>
<div class="t k" style="left:22.30px;top:284.00px;font-size:16.80px;line-height:16.80px;color:#0c0c0c;font-weight:bold;transform:scaleX(0.9735);transform-origin:0 0;">Informações do Equipamento</div>
<div class="t k" style="left:21.00px;top:327.44px;font-size:13.72px;line-height:13.72px;color:#0c0c0c;">Código do Equipamento</div>
<div class="r" style="left:187px;top:322px;width:137px;height:21px;background:#2f7fca"></div>
<div class="t" style="left:190.60px;top:328.05px;font-size:9.50px;line-height:9.50px;color:#fff;">5</div>
<div class="t k" style="left:21.00px;top:346.31px;font-size:13.98px;line-height:13.98px;color:#0c0c0c;">Equipamento</div>
<div class="t k" style="left:190.20px;top:350.56px;font-size:10.07px;line-height:10.07px;color:#0c0c0c;">Calçado de Segurança em Couro - Tamanho 41</div>
<div class="t k" style="left:548.00px;top:328.20px;font-size:12.60px;line-height:12.60px;color:#0c0c0c;font-weight:bold;transform:scaleX(0.9690);transform-origin:0 0;">BOTINA - TIPO B</div>
<div class="t k" style="left:548.00px;top:346.60px;font-size:13.80px;line-height:13.80px;color:#0c0c0c;">Proteção dos Membros Inferiores</div>
<div class="t k" style="left:68.50px;top:370.32px;font-size:13.17px;line-height:13.17px;color:#7f7f7f;">Número do CA</div>
<div class="r" style="left:23px;top:389px;width:179px;height:104px;border:1px solid #d9d9d9;border-radius:8px"></div>
<div class="t k" style="left:59.30px;top:424.96px;font-size:38.08px;line-height:38.08px;color:#000;">39676</div>
<div class="t k" style="left:221.60px;top:387.30px;font-size:13.41px;line-height:13.41px;color:#0c0c0c;">Calçado de segurança, tipo botina até o tornozelo, cabedal confeccionado em couro tipo</div>
<div class="t k" style="left:221.60px;top:405.26px;font-size:13.48px;line-height:13.48px;color:#0c0c0c;">vaqueta, hidrofugado, com fechamento através de atacador. Palmilha de montagem e</div>
<div class="t k" style="left:221.60px;top:423.22px;font-size:13.57px;line-height:13.57px;color:#0c0c0c;">forro frontal interno confeccionados em material não tecido. Construção no sistema stro</div>
<div class="t k" style="left:222.20px;top:466.36px;font-size:13.27px;line-height:13.27px;color:#0c0c0c;">Fabricante:</div>
<div class="t k" style="left:222.20px;top:484.30px;font-size:13.40px;line-height:13.40px;color:#0c0c0c;transform:scaleX(0.8777);transform-origin:0 0;">IBTEC - INSTITUTO BRASILEIRO DE</div>
<div class="t k" style="left:222.20px;top:502.00px;font-size:13.40px;line-height:13.40px;color:#0c0c0c;transform:scaleX(0.8904);transform-origin:0 0;">TECNOLOGIA DO COURO, CALCADO E</div>
<div class="t k" style="left:222.20px;top:519.70px;font-size:13.40px;line-height:13.40px;color:#0c0c0c;transform:scaleX(0.8774);transform-origin:0 0;">ARTEFATOS</div>
<div class="t k" style="left:515.30px;top:467.88px;font-size:12.63px;line-height:12.63px;color:#0c0c0c;">Local:</div>
<div class="t k" style="left:515.30px;top:484.70px;font-size:13.40px;line-height:13.40px;color:#0c0c0c;transform:scaleX(0.8922);transform-origin:0 0;">ESTANCIA VELHA/RS</div>
<div class="t k" style="left:71.70px;top:504.61px;font-size:12.78px;line-height:12.78px;color:#7f7f7f;">Status do CA</div>
<div class="r" style="left:21px;top:529px;width:179px;height:137px;border:1px solid #d9d9d9;border-radius:8px"></div>
<svg class="r" style="left:40px;top:578px;" width="15" height="15" viewBox="0 0 15 15"><circle cx="7.5" cy="7.5" r="7.5" fill="#5f8f7c"/><path d="M4 7.8 L6.5 10.2 L11 5.3" fill="none" stroke="#fff" stroke-width="1.6"/></svg>
<div class="t k" style="left:61.50px;top:577.80px;font-size:17.40px;line-height:17.40px;color:#0c0c0c;font-weight:bold;transform:scaleX(0.9203);transform-origin:0 0;">VÁLIDO</div>
<div class="t k" style="left:42.70px;top:605.88px;font-size:14.04px;line-height:14.04px;color:#2e75b6;font-weight:bold;">(até 26/01/2022)</div>
<div class="t k" style="left:220.30px;top:558.74px;font-size:13.12px;line-height:13.12px;color:#0c0c0c;">Aprovado Para:</div>
<div class="t k" style="left:220.20px;top:576.00px;font-size:13.40px;line-height:13.40px;color:#0c0c0c;transform:scaleX(0.8816);transform-origin:0 0;">PROTEÇÃO DOS PÉS DO USUÁRIO CONTRA IMPACTOS DE QUEDAS DE OBJETOS SOBRE</div>
<div class="t k" style="left:220.20px;top:594.50px;font-size:13.40px;line-height:13.40px;color:#0c0c0c;transform:scaleX(0.8720);transform-origin:0 0;">OS ARTELHOS E CONTRA AGENTES ABRASIVOS E ESCORIANTES.</div>
<div class="t k" style="left:659.50px;top:628.00px;font-size:12.60px;line-height:12.60px;color:#0c0c0c;transform:scaleX(1.0881);transform-origin:0 0;">Mais Informações:</div>
<svg class="r" style="left:660px;top:648px;" width="17" height="17" viewBox="0 0 17 17"><path d="M2 3.5 L4.5 9" stroke="#8b1f30" stroke-width="2.2" stroke-linecap="round"/><circle cx="3.5" cy="12.3" r="1.5" fill="#8b1f30"/><path d="M7.5 12.5 L13.5 15.5" stroke="#8b1f30" stroke-width="2.2" stroke-linecap="round"/><path d="M6 9.5 L14.5 2 L16 2.5 L8.5 10.5 Z" fill="#a5a5a5"/></svg>
<div class="t" style="left:677.00px;top:649.35px;font-size:17.50px;line-height:17.50px;color:#505050;transform:scaleX(0.8597);transform-origin:0 0;">Consulta</div>
<div class="t" style="left:737.00px;top:647.60px;font-size:18.80px;line-height:18.80px;color:#c0272d;font-weight:bold;transform:scaleX(1.3151);transform-origin:0 0;-webkit-text-stroke:0.6px #c0272d;">CA</div>
<div class="t k" style="left:21.60px;top:687.59px;font-size:14.42px;line-height:14.42px;color:#0c0c0c;font-weight:bold;">Movimentações do Equipamento</div>
<div class="r" style="left:18px;top:723px;width:757px;height:21px;background:#3790bd"></div>
<div class="r" style="left:18px;top:744px;width:1px;height:50px;background:#3790bd"></div>
<div class="r" style="left:774px;top:744px;width:1px;height:50px;background:#3790bd"></div>
<div class="r" style="left:18px;top:763px;width:757px;height:1px;background:#4a8a9c"></div>
<div class="r" style="left:18px;top:783px;width:757px;height:1px;background:#4a8a9c"></div>
<div class="r" style="left:18px;top:723px;width:757px;height:1px;background:#2f8095"></div>
<div class="r" style="left:59.5px;top:726px;width:16px;height:16px;background:#f2f2f2;border:1px solid #cfd8de"></div>
<svg class="r" style="left:63.5px;top:732px;" width="8" height="5" viewBox="0 0 8 5"><path d="M0 0 L8 0 L4 4 Z" fill="#555"/></svg>
<div class="r" style="left:170.5px;top:726px;width:16px;height:16px;background:#f2f2f2;border:1px solid #cfd8de"></div>
<svg class="r" style="left:174.5px;top:732px;" width="8" height="5" viewBox="0 0 8 5"><path d="M0 0 L8 0 L4 4 Z" fill="#555"/></svg>
<div class="r" style="left:306.5px;top:726px;width:16px;height:16px;background:#f2f2f2;border:1px solid #cfd8de"></div>
<svg class="r" style="left:310.5px;top:732px;" width="8" height="5" viewBox="0 0 8 5"><path d="M0 0 L8 0 L4 4 Z" fill="#555"/></svg>
<div class="r" style="left:353px;top:726px;width:16px;height:16px;background:#f2f2f2;border:1px solid #cfd8de"></div>
<svg class="r" style="left:357px;top:732px;" width="8" height="5" viewBox="0 0 8 5"><path d="M0 0 L8 0 L4 4 Z" fill="#555"/></svg>
<div class="r" style="left:434.5px;top:726px;width:16px;height:16px;background:#f2f2f2;border:1px solid #cfd8de"></div>
<svg class="r" style="left:438.5px;top:732px;" width="8" height="5" viewBox="0 0 8 5"><path d="M0 0 L8 0 L4 4 Z" fill="#555"/></svg>
<div class="r" style="left:527.5px;top:726px;width:16px;height:16px;background:#f2f2f2;border:1px solid #cfd8de"></div>
<svg class="r" style="left:531.5px;top:732px;" width="8" height="5" viewBox="0 0 8 5"><path d="M0 0 L8 0 L4 4 Z" fill="#555"/></svg>
<div class="r" style="left:758px;top:726px;width:16px;height:16px;background:#f2f2f2;border:1px solid #cfd8de"></div>
<svg class="r" style="left:762px;top:732px;" width="8" height="5" viewBox="0 0 8 5"><path d="M0 0 L8 0 L4 4 Z" fill="#555"/></svg>
<div class="t" style="left:20.80px;top:728.82px;font-size:12.57px;line-height:12.57px;color:#fff;font-weight:bold;">Equip</div>
<div class="t" style="left:79.40px;top:728.98px;font-size:12.24px;line-height:12.24px;color:#fff;font-weight:bold;">Data</div>
<div class="t" style="left:190.30px;top:728.85px;font-size:12.50px;line-height:12.50px;color:#fff;font-weight:bold;">Registro</div>
<div class="t" style="left:326.00px;top:728.04px;font-size:13.12px;line-height:13.12px;color:#fff;font-weight:bold;">Qtd</div>
<div class="t" style="left:372.70px;top:727.99px;font-size:13.21px;line-height:13.21px;color:#fff;font-weight:bold;">Matrícula</div>
<div class="t" style="left:454.40px;top:728.79px;font-size:12.62px;line-height:12.62px;color:#fff;font-weight:bold;">Empregado</div>
<div class="t" style="left:547.40px;top:728.88px;font-size:12.43px;line-height:12.43px;color:#fff;font-weight:bold;">Observações</div>
<div class="t k" style="left:62.70px;top:749.50px;font-size:10.60px;line-height:10.60px;color:#0c0c0c;transform:scaleX(0.9332);transform-origin:0 0;">18</div>
<div class="t k" style="left:90.10px;top:747.59px;font-size:10.83px;line-height:10.83px;color:#0c0c0c;">27/10/2019 16:09</div>
<div class="t k" style="left:189.80px;top:750.22px;font-size:10.16px;line-height:10.16px;color:#0c0c0c;">(-) Retirada</div>
<div class="t k" style="left:341.40px;top:749.50px;font-size:10.60px;line-height:10.60px;color:#0c0c0c;transform:scaleX(0.9551);transform-origin:0 0;">-1</div>
<div class="t k" style="left:403.00px;top:749.50px;font-size:10.60px;line-height:10.60px;color:#0c0c0c;transform:scaleX(1.1368);transform-origin:0 0;">18</div>
<div class="t k" style="left:454.40px;top:750.12px;font-size:10.36px;line-height:10.36px;color:#0c0c0c;">Iraci Quadros</div>
<div class="t k" style="left:62.70px;top:769.80px;font-size:10.60px;line-height:10.60px;color:#0c0c0c;transform:scaleX(0.9332);transform-origin:0 0;">18</div>
<div class="t k" style="left:90.10px;top:767.89px;font-size:10.83px;line-height:10.83px;color:#0c0c0c;">27/10/2019 16:09</div>
<div class="t k" style="left:189.80px;top:770.52px;font-size:10.16px;line-height:10.16px;color:#0c0c0c;">(-) Retirada</div>
<div class="t k" style="left:341.40px;top:769.80px;font-size:10.60px;line-height:10.60px;color:#0c0c0c;transform:scaleX(0.9551);transform-origin:0 0;">-1</div>
<div class="t k" style="left:403.00px;top:769.80px;font-size:10.60px;line-height:10.60px;color:#0c0c0c;transform:scaleX(1.1368);transform-origin:0 0;">14</div>
<div class="t k" style="left:454.40px;top:770.43px;font-size:10.35px;line-height:10.35px;color:#0c0c0c;">Helena Barroso</div>
<div class="t k" style="left:62.70px;top:789.80px;font-size:10.60px;line-height:10.60px;color:#0c0c0c;transform:scaleX(0.9332);transform-origin:0 0;">18</div>
<div class="t k" style="left:90.10px;top:787.89px;font-size:10.83px;line-height:10.83px;color:#0c0c0c;">27/10/2019 16:09</div>
<div class="t k" style="left:189.80px;top:790.52px;font-size:10.16px;line-height:10.16px;color:#0c0c0c;">(-) Retirada</div>
<div class="t k" style="left:341.40px;top:789.80px;font-size:10.60px;line-height:10.60px;color:#0c0c0c;transform:scaleX(0.9551);transform-origin:0 0;">-1</div>
<div class="t k" style="left:403.00px;top:789.80px;font-size:10.60px;line-height:10.60px;color:#0c0c0c;transform:scaleX(1.1368);transform-origin:0 0;">15</div>
<div class="t k" style="left:454.40px;top:791.50px;font-size:9.21px;line-height:9.21px;color:#0c0c0c;">Fernanda Lima Souza</div>
</body></html>
